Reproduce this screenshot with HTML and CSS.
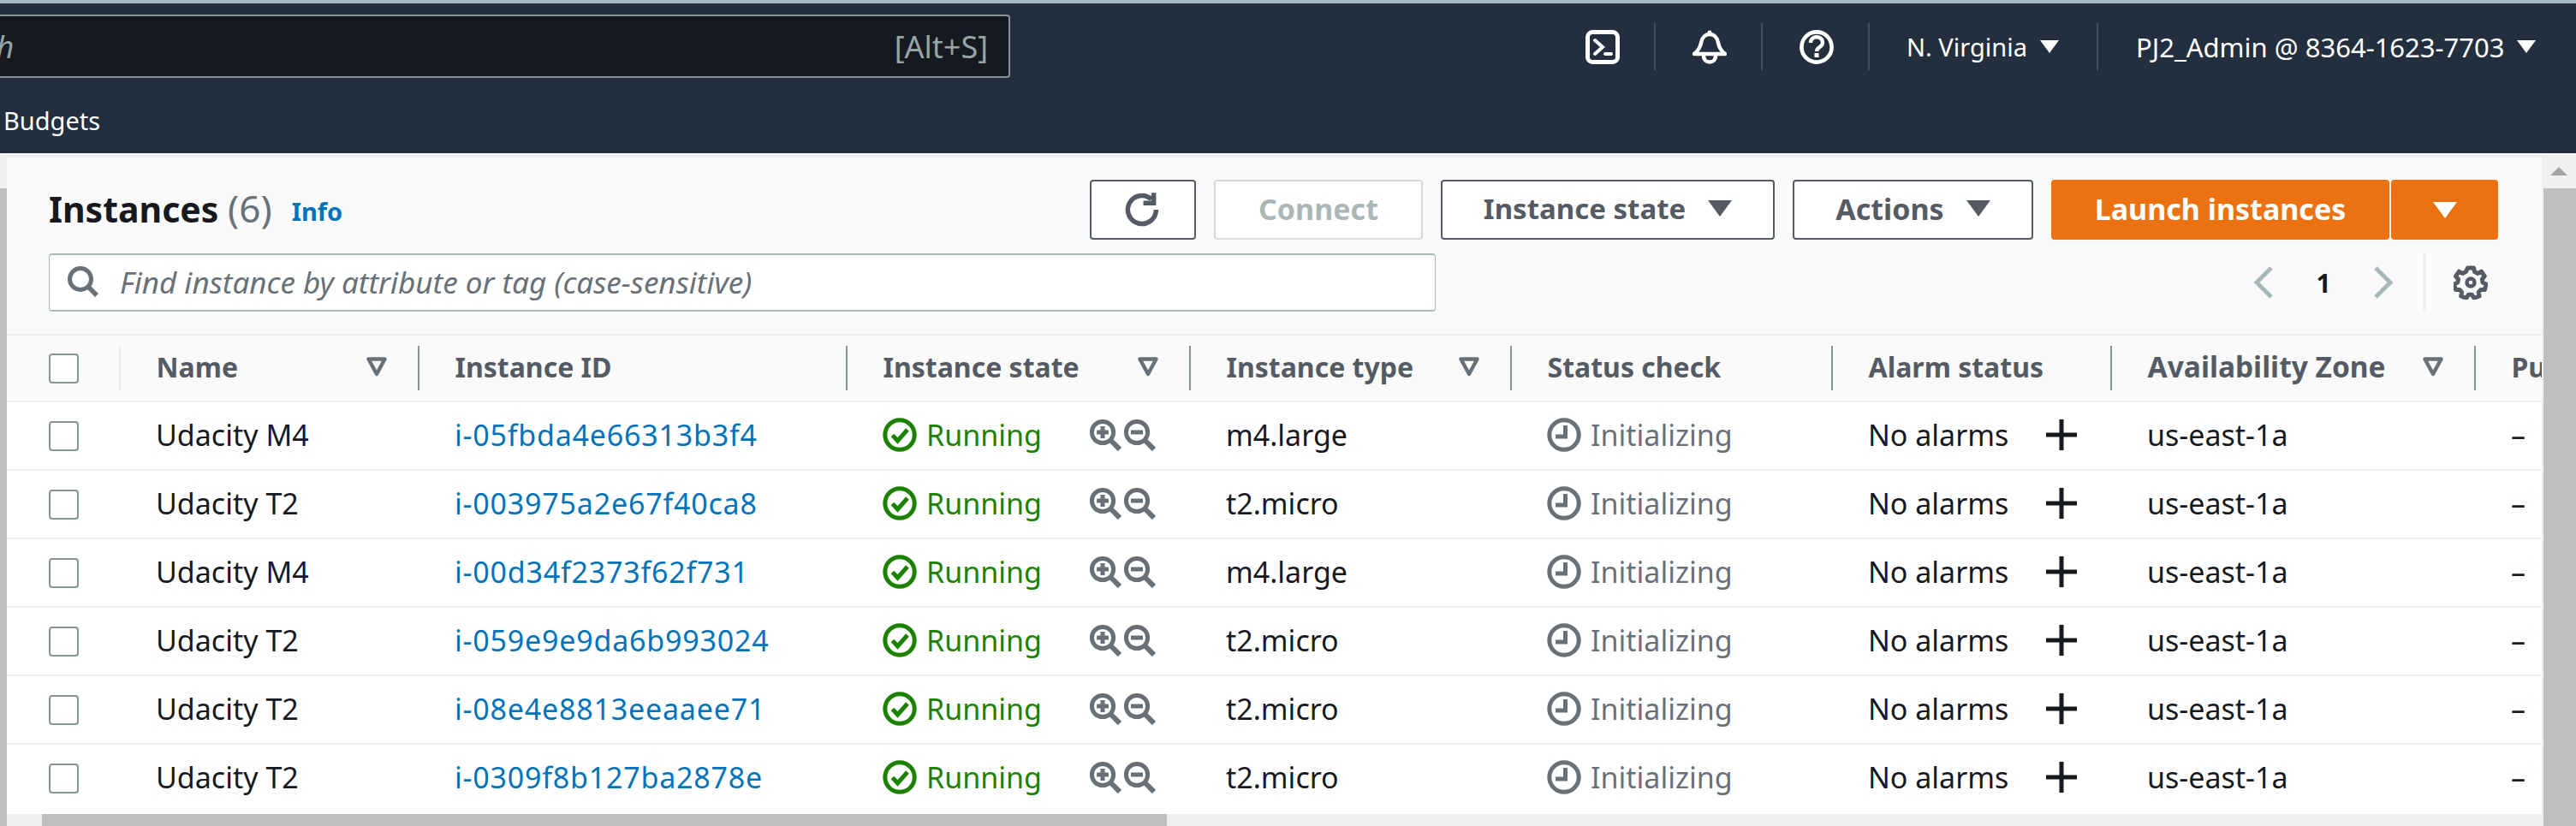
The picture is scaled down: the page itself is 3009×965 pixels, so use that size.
FILE: index.html
```html
<!DOCTYPE html>
<html lang="en">
<head>
<meta charset="utf-8">
<title>Instances | EC2</title>
<link rel="stylesheet" href="styles.css">
</head>
<body>
<svg class="defs" aria-hidden="true">
  <symbol id="i-filter" viewBox="0 0 24 24"><path d="M2.5 3.5h19L12 21z" fill="none" stroke="currentColor" stroke-width="4.4" stroke-linejoin="round"/></symbol>
  <symbol id="i-ok" viewBox="0 0 40 40"><circle cx="20" cy="20" r="17.2" fill="none" stroke="currentColor" stroke-width="5"/><path d="M11.5 20.5l6 6.5L29 14" fill="none" stroke="currentColor" stroke-width="5"/></symbol>
  <symbol id="i-clock" viewBox="0 0 40 40"><circle cx="20" cy="20" r="17.2" fill="none" stroke="currentColor" stroke-width="5"/><path d="M21.5 9v13H10" fill="none" stroke="currentColor" stroke-width="5"/></symbol>
  <symbol id="i-zin" viewBox="0 0 37 37"><circle cx="15" cy="15" r="12.6" fill="none" stroke="currentColor" stroke-width="5"/><path d="M23 23l12 12" stroke="currentColor" stroke-width="6"/><path d="M8 15h14M15 8v14" stroke="currentColor" stroke-width="5"/></symbol>
  <symbol id="i-zout" viewBox="0 0 37 37"><circle cx="15" cy="15" r="12.6" fill="none" stroke="currentColor" stroke-width="5"/><path d="M23 23l12 12" stroke="currentColor" stroke-width="6"/><path d="M8 15h14" stroke="currentColor" stroke-width="5"/></symbol>
  <symbol id="i-plus" viewBox="0 0 36 36"><path d="M0 18h36M18 0v36" stroke="currentColor" stroke-width="5"/></symbol>
</svg>

<header class="topbar">
  <div class="topbar-main">
    <div class="search">
      <span class="search-hint">Search</span>
      <span class="search-key">[Alt+S]</span>
    </div>
    <div class="tools">
      <span class="tool">
        <svg class="tool-icon" viewBox="0 0 40 40"><rect x="2.5" y="2.5" width="35" height="35" rx="6" fill="none" stroke="currentColor" stroke-width="5"/><path d="M11 12l9 8-9 8" fill="none" stroke="currentColor" stroke-width="4" stroke-linecap="round"/><path d="M23 28h7" stroke="currentColor" stroke-width="4" stroke-linecap="round"/></svg>
      </span>
      <span class="tool">
        <svg class="tool-icon" viewBox="0 0 40 40"><path d="M2 28h36c-5-4-7-7-8-13-1-6-5-10-10-10s-9 4-10 10c-1 6-3 9-8 13z" fill="none" stroke="currentColor" stroke-width="4.5" stroke-linejoin="round"/><path d="M13 30c0 10 14 10 14 0" fill="none" stroke="currentColor" stroke-width="4.5"/><circle cx="20" cy="3" r="2.4" fill="currentColor"/></svg>
      </span>
      <span class="tool">
        <svg class="tool-icon" viewBox="0 0 40 40"><circle cx="20" cy="20" r="17.6" fill="none" stroke="currentColor" stroke-width="4.6"/><path d="M13 15c0-9 14-9 14 0 0 5-7 5-7 10" fill="none" stroke="currentColor" stroke-width="4.4"/><rect x="17.5" y="27" width="5" height="5" fill="currentColor"/></svg>
      </span>
      <span class="tool tool-text tool-region">N. Virginia<i class="caret"></i></span>
      <span class="tool tool-text tool-user">PJ2_Admin @ 8364-1623-7703<i class="caret"></i></span>
    </div>
  </div>
  <nav class="favorites"><a>Budgets</a></nav>
</header>

<div class="workspace">
  <div class="left-scroll"><span class="left-scroll-thumb"></span></div>
  <main class="panel">
    <div class="panel-scroll">
      <section class="panel-head">
        <div class="title-row">
          <h1>Instances <span class="count">(6)</span></h1>
          <a class="info">Info</a>
          <div class="actions">
            <button class="btn btn-icon"><svg viewBox="0 0 40 40" class="refresh"><path d="M34 20a15 15 0 1 1-5-11.2" fill="none" stroke="currentColor" stroke-width="5"/><path d="M31.5 2v11h-11" fill="none" stroke="currentColor" stroke-width="5"/></svg></button>
            <button class="btn btn-off">Connect</button>
            <button class="btn btn-state">Instance state<i class="caret caret-lg"></i></button>
            <button class="btn btn-actions">Actions<i class="caret caret-lg"></i></button>
            <div class="launch">
              <button class="btn-launch">Launch instances</button>
              <button class="btn-launch-more"><i class="caret caret-lg"></i></button>
            </div>
          </div>
        </div>
        <div class="filter-row">
          <div class="filter">
            <svg class="filter-icon" viewBox="0 0 36 36"><circle cx="15" cy="15" r="12.5" fill="none" stroke="currentColor" stroke-width="5"/><path d="M24 24l10 10" stroke="currentColor" stroke-width="5.5"/></svg>
            <span class="filter-hint">Find instance by attribute or tag (case-sensitive)</span>
          </div>
          <div class="pager">
            <svg class="chev" viewBox="0 0 24 40"><path d="M21 3L4 20l17 17" fill="none" stroke="currentColor" stroke-width="5"/></svg>
            <span class="page-no">1</span>
            <svg class="chev" viewBox="0 0 24 40"><path d="M3 3l17 17L3 37" fill="none" stroke="currentColor" stroke-width="5"/></svg>
          </div>
          <div class="prefs">
            <svg class="gear" viewBox="0 0 40 40"><circle cx="20" cy="20" r="4.5" fill="none" stroke="currentColor" stroke-width="4.5"/><path d="M16.5 3h7l1 4.6 3.8 1.8 4.2-2.2 3.8 5.4-3 3.6.7 3.8 4 2-1.6 6.4-4.6 0-2.6 3 .9 4.6-6.2 2.3-2.4-4h-4.2l-2.4 4-6.2-2.3.9-4.6-2.6-3-4.6 0-1.6-6.4 4-2 .7-3.8-3-3.6 3.8-5.4 4.2 2.2 3.8-1.8z" fill="none" stroke="currentColor" stroke-width="5" stroke-linejoin="round"/></svg>
          </div>
        </div>
      </section>

      <div class="table">
        <div class="row row-head">
          <div class="cell cell-check"><span class="check"></span></div>
          <div class="cell"><span class="grow">Name</span><svg class="sort"><use href="#i-filter"/></svg></div>
          <div class="cell">Instance ID</div>
          <div class="cell"><span class="grow">Instance state</span><svg class="sort"><use href="#i-filter"/></svg></div>
          <div class="cell"><span class="grow">Instance type</span><svg class="sort"><use href="#i-filter"/></svg></div>
          <div class="cell">Status check</div>
          <div class="cell">Alarm status</div>
          <div class="cell"><span class="grow grow-wide">Availability Zone</span><svg class="sort"><use href="#i-filter"/></svg></div>
          <div class="cell cell-last">Public IPv4 DNS</div>
        </div>

        <div class="row">
          <div class="cell cell-check"><span class="check"></span></div>
          <div class="cell">Udacity M4</div>
          <div class="cell"><a class="link">i-05fbda4e66313b3f4</a></div>
          <div class="cell state"><svg class="stat"><use href="#i-ok"/></svg><span class="running">Running</span><svg class="zoom zoom-first"><use href="#i-zin"/></svg><svg class="zoom"><use href="#i-zout"/></svg></div>
          <div class="cell">m4.large</div>
          <div class="cell pending"><svg class="stat"><use href="#i-clock"/></svg>Initializing</div>
          <div class="cell alarm"><span class="alarm-text">No alarms</span><svg class="plus"><use href="#i-plus"/></svg></div>
          <div class="cell">us-east-1a</div>
          <div class="cell cell-last">–</div>
        </div>
        <div class="row">
          <div class="cell cell-check"><span class="check"></span></div>
          <div class="cell">Udacity T2</div>
          <div class="cell"><a class="link">i-003975a2e67f40ca8</a></div>
          <div class="cell state"><svg class="stat"><use href="#i-ok"/></svg><span class="running">Running</span><svg class="zoom zoom-first"><use href="#i-zin"/></svg><svg class="zoom"><use href="#i-zout"/></svg></div>
          <div class="cell">t2.micro</div>
          <div class="cell pending"><svg class="stat"><use href="#i-clock"/></svg>Initializing</div>
          <div class="cell alarm"><span class="alarm-text">No alarms</span><svg class="plus"><use href="#i-plus"/></svg></div>
          <div class="cell">us-east-1a</div>
          <div class="cell cell-last">–</div>
        </div>
        <div class="row">
          <div class="cell cell-check"><span class="check"></span></div>
          <div class="cell">Udacity M4</div>
          <div class="cell"><a class="link">i-00d34f2373f62f731</a></div>
          <div class="cell state"><svg class="stat"><use href="#i-ok"/></svg><span class="running">Running</span><svg class="zoom zoom-first"><use href="#i-zin"/></svg><svg class="zoom"><use href="#i-zout"/></svg></div>
          <div class="cell">m4.large</div>
          <div class="cell pending"><svg class="stat"><use href="#i-clock"/></svg>Initializing</div>
          <div class="cell alarm"><span class="alarm-text">No alarms</span><svg class="plus"><use href="#i-plus"/></svg></div>
          <div class="cell">us-east-1a</div>
          <div class="cell cell-last">–</div>
        </div>
        <div class="row">
          <div class="cell cell-check"><span class="check"></span></div>
          <div class="cell">Udacity T2</div>
          <div class="cell"><a class="link">i-059e9e9da6b993024</a></div>
          <div class="cell state"><svg class="stat"><use href="#i-ok"/></svg><span class="running">Running</span><svg class="zoom zoom-first"><use href="#i-zin"/></svg><svg class="zoom"><use href="#i-zout"/></svg></div>
          <div class="cell">t2.micro</div>
          <div class="cell pending"><svg class="stat"><use href="#i-clock"/></svg>Initializing</div>
          <div class="cell alarm"><span class="alarm-text">No alarms</span><svg class="plus"><use href="#i-plus"/></svg></div>
          <div class="cell">us-east-1a</div>
          <div class="cell cell-last">–</div>
        </div>
        <div class="row">
          <div class="cell cell-check"><span class="check"></span></div>
          <div class="cell">Udacity T2</div>
          <div class="cell"><a class="link">i-08e4e8813eeaaee71</a></div>
          <div class="cell state"><svg class="stat"><use href="#i-ok"/></svg><span class="running">Running</span><svg class="zoom zoom-first"><use href="#i-zin"/></svg><svg class="zoom"><use href="#i-zout"/></svg></div>
          <div class="cell">t2.micro</div>
          <div class="cell pending"><svg class="stat"><use href="#i-clock"/></svg>Initializing</div>
          <div class="cell alarm"><span class="alarm-text">No alarms</span><svg class="plus"><use href="#i-plus"/></svg></div>
          <div class="cell">us-east-1a</div>
          <div class="cell cell-last">–</div>
        </div>
        <div class="row row-end">
          <div class="cell cell-check"><span class="check"></span></div>
          <div class="cell">Udacity T2</div>
          <div class="cell"><a class="link">i-0309f8b127ba2878e</a></div>
          <div class="cell state"><svg class="stat"><use href="#i-ok"/></svg><span class="running">Running</span><svg class="zoom zoom-first"><use href="#i-zin"/></svg><svg class="zoom"><use href="#i-zout"/></svg></div>
          <div class="cell">t2.micro</div>
          <div class="cell pending"><svg class="stat"><use href="#i-clock"/></svg>Initializing</div>
          <div class="cell alarm"><span class="alarm-text">No alarms</span><svg class="plus"><use href="#i-plus"/></svg></div>
          <div class="cell">us-east-1a</div>
          <div class="cell cell-last">–</div>
        </div>
      </div>
    </div>
    <div class="h-scroll"><span class="h-arrow"></span><span class="h-thumb"></span></div>
  </main>
  <aside class="v-scroll"><span class="v-arrow"></span><span class="v-thumb"></span></aside>
</div>
</body>
</html>
```

FILE: styles.css
```css
* { box-sizing: border-box; }
html, body { margin: 0; height: 100%; }
body {
  width: 3009px;
  height: 965px;
  overflow: hidden;
  display: flex;
  flex-direction: column;
  background: #eaeded;
  font-family: "Noto Sans", "Open Sans", sans-serif;
  font-size: 34px;
  color: #16191f;
}
.defs { display: none; }

/* top navigation */
.topbar {
  flex: 0 0 181px;
  display: flex;
  flex-direction: column;
  background: #232f3e;
  border-top: 4px solid #a6bac4;
  border-bottom: 2px solid #fafafa;
  color: #fff;
}
.topbar-main { display: flex; align-items: flex-start; height: 102px; }
.search {
  width: 1240px;
  height: 74px;
  margin: 13px 0 0 -60px;
  padding: 0 24px 0 0;
  display: flex;
  align-items: center;
  background: #16191f;
  border: 2px solid #879596;
  border-radius: 4px;
  color: #95a5a6;
}
.search-hint { width: 1100px; margin-right: auto; font-style: italic; font-size: 36px; text-indent: -33px; }
.search-key { font-size: 36px; white-space: nowrap; }
.tools { margin-left: 672px; height: 55px; margin-top: 23px; display: flex; align-items: center; }
.tool { display: flex; align-items: center; height: 55px; width: 125px; border-right: 2px solid #414d5c; }
.tool:first-child { width: 82px; }
.tool-icon { width: 40px; height: 40px; margin-left: 43px; }
.tool:first-child .tool-icon { margin-left: 0; }
.tool-text { white-space: nowrap; }
.tool-region { width: 267px; padding-left: 43px; font-size: 29px; }
.tool-user { width: auto; padding-left: 44px; border-right: 0; font-size: 31px; }
.caret {
  display: inline-block;
  width: 0;
  height: 0;
  margin-left: 15px;
  border-left: 11px solid transparent;
  border-right: 11px solid transparent;
  border-top: 15px solid currentColor;
}
.caret-lg { margin-left: 26px; border-left-width: 14px; border-right-width: 14px; border-top-width: 19px; }
.favorites { padding-left: 4px; font-size: 29px; height: 70px; line-height: 70px; }

/* workspace */
.workspace { flex: 1; min-height: 0; display: flex; }
.left-scroll { flex: 0 0 8px; display: flex; flex-direction: column; background: #f0f0f0; }
.left-scroll-thumb { margin-top: 39px; flex: 1; background: #bfbfbf; }
.panel { flex: 1; min-width: 0; display: flex; flex-direction: column; margin-top: 3px; background: #fff; }
.panel-scroll { flex: 1; min-height: 0; overflow: hidden; }
.panel-head { height: 208px; padding: 26px 51px 0 49px; background: #fafafa; border-bottom: 2px solid #eaeded; }
.title-row { display: flex; align-items: center; height: 70px; }
h1 { margin: 0 0 4px; font-size: 41px; font-weight: 700; white-space: nowrap; }
.count { font-size: 44px; font-weight: 400; color: #687078; }
.info { margin-left: 23px; padding-top: 2px; font-size: 29px; font-weight: 700; color: #0073bb; }
.actions { margin-left: auto; display: flex; gap: 21px; }
.btn, .btn-launch, .btn-launch-more {
  height: 70px;
  padding: 0 0 3px;
  font: inherit;
  font-size: 34px;
  font-weight: 700;
  border-radius: 4px;
  display: flex;
  align-items: center;
  justify-content: center;
}
.btn { background: #fff; border: 2px solid #545b64; color: #545b64; }
.btn-icon { width: 124px; padding: 0; }
.refresh { width: 44px; height: 44px; }
.btn-off { width: 244px; color: #aab7b8; border-color: #d5dbdb; }
.btn-state { width: 390px; font-size: 33px; }
.btn-actions { width: 281px; }
.launch { display: flex; gap: 2px; }
.btn-launch, .btn-launch-more { background: #ec7211; border: 0; color: #fff; }
.btn-launch { width: 395px; }
.btn-launch-more { width: 125px; padding: 0; }
.btn-launch-more .caret { margin-left: 0; }
.filter-row { display: flex; margin-top: 16px; align-items: stretch; height: 68px; }
.filter { width: 1620px; display: flex; align-items: center; padding: 0 0 2px 21px; background: #fff; border: 1px solid #aab7b8; border-top-width: 2px; border-bottom-width: 2px; border-radius: 4px; }
.filter-icon { width: 36px; height: 36px; color: #687078; }
.filter-hint { margin-left: 25px; font-size: 35px; font-style: italic; color: #687078; white-space: nowrap; }
.pager { margin-left: auto; display: flex; align-items: center; color: #aab7b8; }
.chev { width: 24px; height: 40px; }
.page-no { width: 116px; text-align: center; font-size: 30px; font-weight: 700; color: #16191f; }
.prefs { margin-left: 35px; padding-left: 33px; display: flex; align-items: center; border-left: 2px solid #eaeded; width: 87px; }
.gear { width: 40px; height: 40px; color: #545b64; flex: none; }

/* table */
.row {
  display: grid;
  grid-template-columns: 133px 349px 500px 401px 375px 375px 326px 425px 1fr;
  height: 80px;
  align-items: center;
  background: #fff;
  border-bottom: 2px solid #eaeded;
  white-space: nowrap;
}
.row-end { border-bottom: 0; height: 82px; }
.cell { display: flex; align-items: center; padding: 0 0 2px 41px; min-width: 0; height: 100%; }
.row-end .cell { padding-bottom: 6px; }
.cell-check { padding: 0 0 0 49px; }
.row-end .cell-check { padding: 0 0 4px 49px; }
.cell-last { overflow: hidden; }
.check { width: 35px; height: 35px; background: #fff; border: 2px solid #879596; border-radius: 4px; }
.row-head { height: 78px; background: #fafafa; font-size: 32px; font-weight: 700; color: #545b64; }
.row-head .cell { height: 52px; padding: 0 36px 4px 41.5px; border-right: 2px solid #879596; }
.row-head .cell-check { padding: 0 0 0 49px; border-right: 2px solid #eaeded; }
.row-head .cell-last { border-right: 0; padding-right: 0; }
.grow { flex: 1; }
.grow-wide { font-size: 33.5px; }
.sort { width: 24px; height: 24px; color: #687078; flex: none; }
.link { color: #0073bb; letter-spacing: .8px; }
.state { color: #1d8102; }
.stat { width: 40px; height: 40px; margin-right: 11px; flex: none; }
.running { width: 191px; }
.zoom { width: 37px; height: 37px; margin-left: 3px; color: #687078; flex: none; }
.zoom-first { margin-left: 0; }
.pending { color: #687078; }
.alarm-text { width: 208px; }
.plus { width: 36px; height: 36px; flex: none; }

/* scrollbars */
.h-scroll { flex: 0 0 14px; display: flex; background: #f0f0f0; }
.h-arrow { width: 41px; }
.h-thumb { width: 1314px; background: #bfbfbf; }
.v-scroll { flex: 0 0 40px; display: flex; flex-direction: column; background: #f0f0f0; }
.v-arrow {
  height: 39px;
  display: flex;
  justify-content: center;
  padding-top: 14px;
}
.v-arrow::before { content: ""; width: 0; height: 0; border-left: 10px solid transparent; border-right: 10px solid transparent; border-bottom: 10px solid #a3a3a3; }
.v-thumb { flex: 1; margin-left: 2px; background: #bfbfbf; }
```
